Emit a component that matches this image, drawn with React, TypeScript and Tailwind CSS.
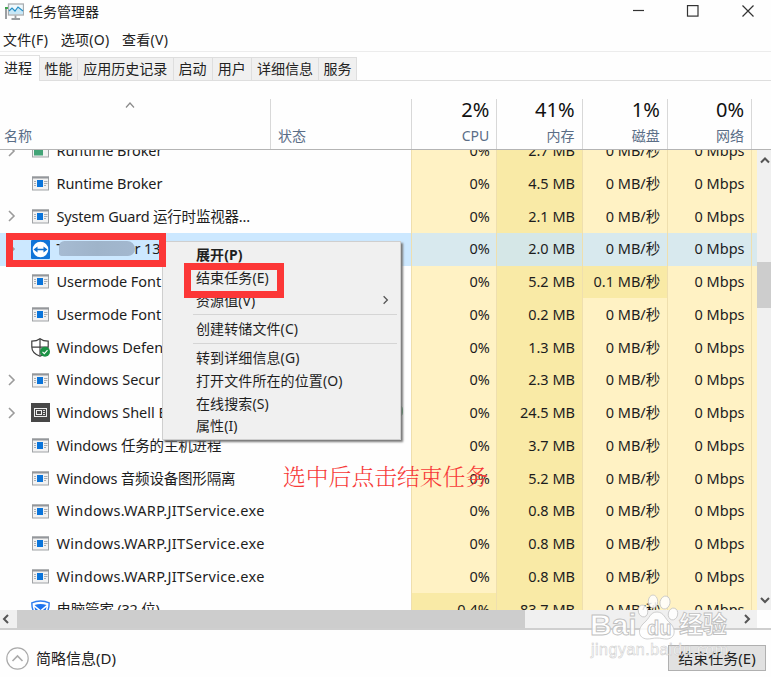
import type { ReactNode } from "react";
import clsx from "clsx";

type IconKind = "app" | "broker" | "remote" | "shield" | "shell" | "manager";

type Process = {
  name: ReactNode;
  icon: IconKind;
  tracking?: string;
  expandable?: boolean;
  selected?: boolean;
  cpu?: string;
  memory: string;
  disk?: string;
};

const warp = { name: "Windows.WARP.JITService.exe", icon: "app", tracking: "tracking-[0.32px]", memory: "0.8 MB" } as const;

const processes: Process[] = [
  { name: "Runtime Broker", icon: "broker", tracking: "tracking-[-0.1px]", expandable: true, memory: "2.7 MB" },
  { name: "Runtime Broker", icon: "app", tracking: "tracking-[-0.1px]", memory: "4.5 MB" },
  { name: "System Guard 运行时监视器...", icon: "app", tracking: "tracking-[-0.2px]", expandable: true, memory: "2.1 MB" },
  { name: <MaskedName />, icon: "remote", expandable: true, selected: true, memory: "2.0 MB" },
  { name: "Usermode Font", icon: "app", tracking: "tracking-[-0.06px]", memory: "5.2 MB", disk: "0.1 MB/秒" },
  { name: "Usermode Font", icon: "app", tracking: "tracking-[-0.06px]", memory: "0.2 MB" },
  { name: "Windows Defen", icon: "shield", memory: "1.3 MB" },
  { name: "Windows Secur", icon: "app", expandable: true, memory: "2.3 MB" },
  { name: "Windows Shell E", icon: "shell", expandable: true, memory: "24.5 MB" },
  { name: "Windows 任务的主机进程", icon: "app", tracking: "tracking-[-0.16px]", memory: "3.7 MB" },
  { name: "Windows 音频设备图形隔离", icon: "app", tracking: "tracking-[-0.18px]", memory: "5.2 MB" },
  warp,
  warp,
  warp,
  { name: "电脑管家 (32 位)", icon: "manager", tracking: "tracking-[-0.2px]", cpu: "0.4%", memory: "83.7 MB" },
];

const usage = [
  { value: "2%", label: "CPU" },
  { value: "41%", label: "内存" },
  { value: "1%", label: "磁盘" },
  { value: "0%", label: "网络" },
];

const tabs = [
  { label: "性能", width: "w-[38px]" },
  { label: "应用历史记录", width: "w-[95.5px]" },
  { label: "启动", width: "w-[39px]" },
  { label: "用户", width: "w-[39.5px]" },
  { label: "详细信息", width: "w-[67px]" },
  { label: "服务", width: "w-[38px]" },
];

function MaskedName() {
  return (
    <span className="flex items-center">
      T
      <span className="-mt-0.5 -ml-[6px] h-[15px] w-[76px] rounded-[6px_9px_8px_3px] bg-linear-to-r from-[#a6bbd2] via-[#9fb4ca] to-[#a3b8cf]" />
      <span className="tracking-[-0.1px]">r 13</span>
    </span>
  );
}

function Chevron({ className, d = "M1 1l5 5-5 5" }: { className?: string; d?: string }) {
  return (
    <svg viewBox="0 0 7 12" className={clsx("h-3 w-[7px] overflow-visible", className)} fill="none" stroke="currentColor">
      <path d={d} />
    </svg>
  );
}

function ProcessIcon({ kind }: { kind: IconKind }) {
  if (kind === "remote") {
    return (
      <svg viewBox="0 0 19 19" className="size-[19px]">
        <rect width="19" height="19" rx="1" fill="#1074d8" />
        <circle cx="9.5" cy="9.5" r="7.8" fill="#fff" />
        <path d="M2.500 9.500l4-3v2.200h6V6.500l4 3-4 3v-2.200h-6v2.200z" fill="#0f6fd0" />
      </svg>
    );
  }
  if (kind === "shield") {
    return (
      <svg viewBox="0 0 19 19" className="size-[19px]">
        <path d="M9 .8C6.700 2.500 4 3.200.8 3.200V9c0 4.500 3.500 7.500 8.200 9.300 4.700-1.800 8.200-4.800 8.200-9.300V3.200C14 3.200 11.300 2.500 9 .8z" fill="#fff" stroke="#3f3f3f" strokeWidth="1.200" />
        <path d="M9 .8v17M1 9.200h16" stroke="#3f3f3f" strokeWidth="1.200" />
        <circle cx="14" cy="13.800" r="5" fill="#1b9245" />
        <path d="M11.500 13.800l1.800 1.800 3.200-3.400" fill="none" stroke="#fff" strokeWidth="1.100" />
      </svg>
    );
  }
  if (kind === "shell") {
    return (
      <svg viewBox="0 0 19 19" className="size-[19px]">
        <rect width="19" height="19" fill="#474747" />
        <rect x="3.500" y="5.500" width="12" height="8" fill="none" stroke="#eee" />
        <rect x="5.500" y="7.500" width="5" height="4" fill="none" stroke="#eee" />
        <path d="M12 7.500h2M12 9.500h2M12 11.500h2" stroke="#ddd" />
      </svg>
    );
  }
  if (kind === "manager") {
    return (
      <svg viewBox="0 0 19 19" className="size-[19px]">
        <path d="M9.500 1C6.500 1 3.500 1.600.8 2.800c0 7 1.700 12 8.700 15.400 7-3.400 8.700-8.400 8.700-15.400C15.500 1.600 12.500 1 9.500 1z" fill="#fff" stroke="#2f7df0" strokeWidth="1.400" />
        <path d="M3.500 5c4-1.500 8-1.500 12 0L9.500 10zM3.500 7l6 5 6-5c-.5 4-2.500 6.500-6 8.500-3.500-2-5.500-4.500-6-8.500z" fill="#1f74ee" />
      </svg>
    );
  }
  return (
    <svg viewBox="0 0 19 19" className="size-[19px]">
      <rect x="1.500" y="3" width="16" height="13" fill="#f2f2f2" stroke="#a0a3a6" />
      <path d="M1 3.500h17" stroke="#94979b" strokeWidth="2" />
      {kind === "broker" ? (
        <>
          <rect x="3" y="6" width="9" height="8.500" fill="#42a477" />
          <path d="M13.500 7.500h3" stroke="#6fae8c" />
        </>
      ) : (
        <>
          <rect x="6" y="6" width="6" height="7" fill="#0a74da" />
          <path d="M3 7.500h2M3 9.500h2M3 11.500h2M13 7.500h3.500M13 9.500h3.500M13 11.500h2" stroke="#a9aeb4" />
        </>
      )}
    </svg>
  );
}

function Cell({ children, tone, last }: { children: ReactNode; tone: string; last?: boolean }) {
  return (
    <div className={clsx("flex h-full w-[85.25px] shrink-0 items-center justify-end border-l border-[#efdfae] pr-[6.500px]", tone, last && "border-r")}>
      {children}
    </div>
  );
}

function ProcessRow({ row }: { row: Process }) {
  const light = row.selected ? "bg-[#d8e9ee]" : "bg-[#fff2c4]";
  const dark = row.selected ? "bg-[#d5e7e7]" : "bg-[#f9eaa6]";
  return (
    <div className={clsx("flex h-[32.75px] w-[757px] shrink-0 items-center text-[#1d1d1d]", row.selected && "bg-[#cce8ff]")}>
      <div className="flex w-[411px] shrink-0 items-center whitespace-nowrap">
        <span className="flex w-[31px] shrink-0 pl-2">
          {row.expandable && <Chevron className="text-[#9b9b9b] [stroke-width:1.6]" />}
        </span>
        <ProcessIcon kind={row.icon} />
        <span className={clsx("ml-[6.500px] text-[14.500px]", row.tracking)}>{row.name}</span>
      </div>
      <Cell tone={row.cpu ? dark : light}>{row.cpu ?? "0%"}</Cell>
      <Cell tone={dark}>{row.memory}</Cell>
      <Cell tone={row.disk ? dark : light}>{row.disk ?? "0 MB/秒"}</Cell>
      <Cell tone={light} last>0 Mbps</Cell>
      <div className={clsx("h-full flex-1", light)} />
    </div>
  );
}

function TitleBar() {
  return (
    <div className="flex h-6 shrink-0 items-center justify-between pr-[17px] pb-[2px] pl-[5px]">
      <div className="flex items-center gap-[5px] text-[14px] text-[#222]">
        <svg viewBox="0 0 19 17" className="h-[17px] w-[19px]">
          <path d="M1 4v12" stroke="#9c9fa2" strokeWidth="2" />
          <path d="M0 5h3" stroke="#3ba54b" strokeWidth="2" />
          <rect x="3.500" y="1" width="15" height="11" fill="#eef8fd" stroke="#a8acaf" strokeWidth="1.300" />
          <path d="M4 8l3-3 3 3 3-4 5 4v3H4z" fill="#c7e7f7" />
          <path d="M4 8l3-3 3 3 3-4 5 4" fill="none" stroke="#288fc4" strokeWidth="1.200" />
          <path d="M10.500 12.500v3M6.500 16h8.500" stroke="#999da0" strokeWidth="1.800" />
        </svg>
        任务管理器
      </div>
      <svg viewBox="0 0 122 12" className="h-3 w-[122px]" fill="none" stroke="#333" strokeWidth="1.200">
        <path d="M1 5.500h11" />
        <rect x="55.500" y=".6" width="10.500" height="10.500" />
        <path d="M110.500.5l11 11M121.500.5l-11 11" />
      </svg>
    </div>
  );
}

function ColumnHeader() {
  return (
    <div className="flex h-[69px] shrink-0 items-end border-b border-[#b4b4b4] text-[14px] text-[#5a6d86]">
      <div className="flex h-[50px] w-[270px] flex-col justify-between pb-[3.500px] pl-1">
        <svg viewBox="0 0 10 6" className="mt-[3px] ml-[121px] h-1.5 w-2.5" fill="none" stroke="#8a8a8a" strokeWidth="1.200">
          <path d="M1 5.500l4-4.500 4 4.500" />
        </svg>
        <span className="leading-5">名称</span>
      </div>
      <div className="flex h-[50px] w-[141px] items-end border-l border-[#d8d8d8] pb-[3.500px] pl-[7px] leading-5">状态</div>
      {usage.map((col, i) => (
        <div
          key={col.label}
          className={clsx("flex h-[50px] w-[85.25px] flex-col items-end justify-between border-l border-[#d8d8d8] pr-[7px] pb-[3.500px]", i === 3 && "border-r")}
        >
          <span className="text-[20px] leading-[22px] text-[#111]">{col.value}</span>
          <span className="leading-5">{col.label}</span>
        </div>
      ))}
    </div>
  );
}

function ContextMenu() {
  return (
    <div className="absolute top-[241px] left-[162px] flex h-[199px] w-[239px] flex-col border border-[#cfcfcf] bg-[#f0f0f0] pt-px pl-[33px] text-[14px] tracking-[0.1px] whitespace-nowrap text-[#1f1f1f] shadow-[2px_2px_2px_#777]">
      <div className="h-[23.500px] leading-[23px] font-bold">展开(P)</div>
      <div className="h-[22.500px] leading-[22px]">结束任务(E)</div>
      <div className="flex h-[22px] items-center justify-between pr-[11px]">
        资源值(V)
        <Chevron className="scale-75 text-[#555] [stroke-width:1.700]" />
      </div>
      <div className="-ml-[3px] mt-[3px] mr-[3px] border-t border-[#d5d5d5]" />
      <div className="h-[28px] leading-[27px]">创建转储文件(C)</div>
      <div className="-ml-[3px] mr-[3px] border-t border-[#d5d5d5]" />
      <div className="mt-[2px] h-[23px] leading-[23px]">转到详细信息(G)</div>
      <div className="h-[22.500px] leading-[23px]">打开文件所在的位置(O)</div>
      <div className="h-[22.500px] leading-[23px]">在线搜索(S)</div>
      <div className="h-[22.500px] leading-[23px]">属性(I)</div>
    </div>
  );
}

function Watermark() {
  return (
    <div className="absolute top-[594px] left-[590px] h-[68px] w-[140px] font-['Liberation_Sans','Noto_Sans_CJK_SC',sans-serif] font-bold whitespace-nowrap text-white/90 [-webkit-text-stroke:0.900px_#c0c0c0]">
      <span className="absolute top-[13px] left-0 text-[30px] leading-9">Bai</span>
      <svg viewBox="0 0 42 46" className="absolute top-0 left-[47px] h-[46px] w-[42px]" fill="#fff" fillOpacity=".85" stroke="#c4c4c4" strokeWidth=".8">
        <ellipse cx="16" cy="7.500" rx="4.700" ry="6.500" />
        <ellipse cx="28" cy="8.500" rx="5" ry="6.500" transform="rotate(12 28 8.500)" />
        <ellipse cx="6" cy="17" rx="4.700" ry="6" transform="rotate(-15 6 17)" />
        <ellipse cx="36" cy="20" rx="4.700" ry="6" transform="rotate(12 36 20)" />
        <path d="M20 18c7 0 8 7 13 11s7 15-3 16c-4 0-6-1-10-1s-6 1-10 1C0 44 1 34 7 29S13 18 20 18z" />
      </svg>
      <span className="absolute top-[20px] left-[57px] text-[20px] leading-7">du</span>
      <span className="absolute top-[15px] left-[89px] text-[24px] leading-8">经验</span>
      <span className="absolute top-[46px] left-[1px] text-[16px] leading-5 font-normal tracking-[0.500px] [-webkit-text-stroke:0.500px_#cacaca]">
        jingyan.baidu.com
      </span>
    </div>
  );
}

export default function App() {
  return (
    <div className="relative flex h-[677px] w-[771px] flex-col overflow-hidden bg-[#fefefe] font-['Noto_Sans','Noto_Sans_CJK_SC',sans-serif]">
      <TitleBar />
      <div className="flex h-[28px] shrink-0 items-center gap-[12.500px] border-b border-[#ececec] pt-[4px] pl-[3px] text-[14px] tracking-[0.300px] text-[#222]">
        <span>文件(F)</span>
        <span>选项(O)</span>
        <span>查看(V)</span>
      </div>

      <div className="flex h-[29px] shrink-0 items-end text-[14px] text-[#222]">
        <div className="h-[26px] w-10 border-t border-r border-[#e0e0e0] pl-1 leading-[23px]">进程</div>
        {tabs.map((tab) => (
          <div key={tab.label} className={clsx("h-6 border-t border-r border-b border-[#dedede] bg-[#f0f0f0] text-center leading-[22px]", tab.width)}>
            {tab.label}
          </div>
        ))}
        <div className="flex-1 border-b border-[#dedede]" />
      </div>

      <ColumnHeader />

      <div className="flex h-[460px] shrink-0">
        <div className="h-full w-[757px] overflow-hidden text-[14.500px]">
          <div className="-mt-[15.500px] flex flex-col">
            {processes.map((row, i) => (
              <ProcessRow key={i} row={row} />
            ))}
          </div>
        </div>
        <div className="flex w-3.5 flex-col items-center bg-[#f0f0f0] pt-[5px] pb-[3px] text-[#555]">
          <Chevron d="M0 7.500l4-4 4 4" className="shrink-0 [stroke-width:2]" />
          <div className="mt-[95px] h-[46px] w-full bg-[#cdcdcd]" />
          <Chevron d="M0 3l4 4 4-4" className="mt-auto shrink-0 [stroke-width:2]" />
        </div>
      </div>

      <div className="flex h-5 shrink-0 items-center border-b-2 border-[#cfcfcf]">
        <div className="flex h-full w-[757px] items-center bg-[#f0f0f0] text-[#555]">
          <Chevron d="M6 2L2 6l4 4" className="mr-[8px] ml-[2px] [stroke-width:2]" />
          <div className="h-full w-[508px] bg-[#cdcdcd]" />
          <Chevron d="M1 2l4 4-4 4" className="mr-[6px] ml-auto [stroke-width:2]" />
        </div>
      </div>

      <div className="flex flex-1 items-center justify-between pr-[5px] pb-[1px] pl-[6px]">
        <div className="flex items-center gap-[7px] pt-[11px] text-[15px] text-[#222]">
          <svg viewBox="0 0 23 23" className="size-[23px]" fill="none" stroke="#aaa" strokeWidth="1.200">
            <circle cx="11.500" cy="11.500" r="10.700" />
            <path d="M6.500 14l5-5 5 5" strokeWidth="1.600" />
          </svg>
          简略信息(D)
        </div>
        <button className="mt-[10px] h-[26px] w-[98px] border border-[#b0b0b0] bg-[#e1e1e1] text-[15px] leading-[23px] whitespace-nowrap text-[#222]">
          结束任务(E)
        </button>
      </div>

      <span className="absolute top-[405px] left-[394px] h-[12px] w-[9px] rounded-full border-2 border-[#3c9a5a]" />
      <ContextMenu />
      <div className="absolute top-[233px] left-[6px] h-[34px] w-[160px] border-7 border-[#fc3737]" />
      <div className="absolute top-[263px] left-[184px] h-[35px] w-[100px] border-7 border-[#fc3737]" />
      <p className="absolute top-[461px] left-[283px] font-['Noto_Serif_CJK_SC','Noto_Sans_CJK_SC',serif] text-[22.800px] leading-[30px] font-light whitespace-nowrap text-[#f73b39]">
        选中后点击结束任务
      </p>
      <Watermark />
    </div>
  );
}
